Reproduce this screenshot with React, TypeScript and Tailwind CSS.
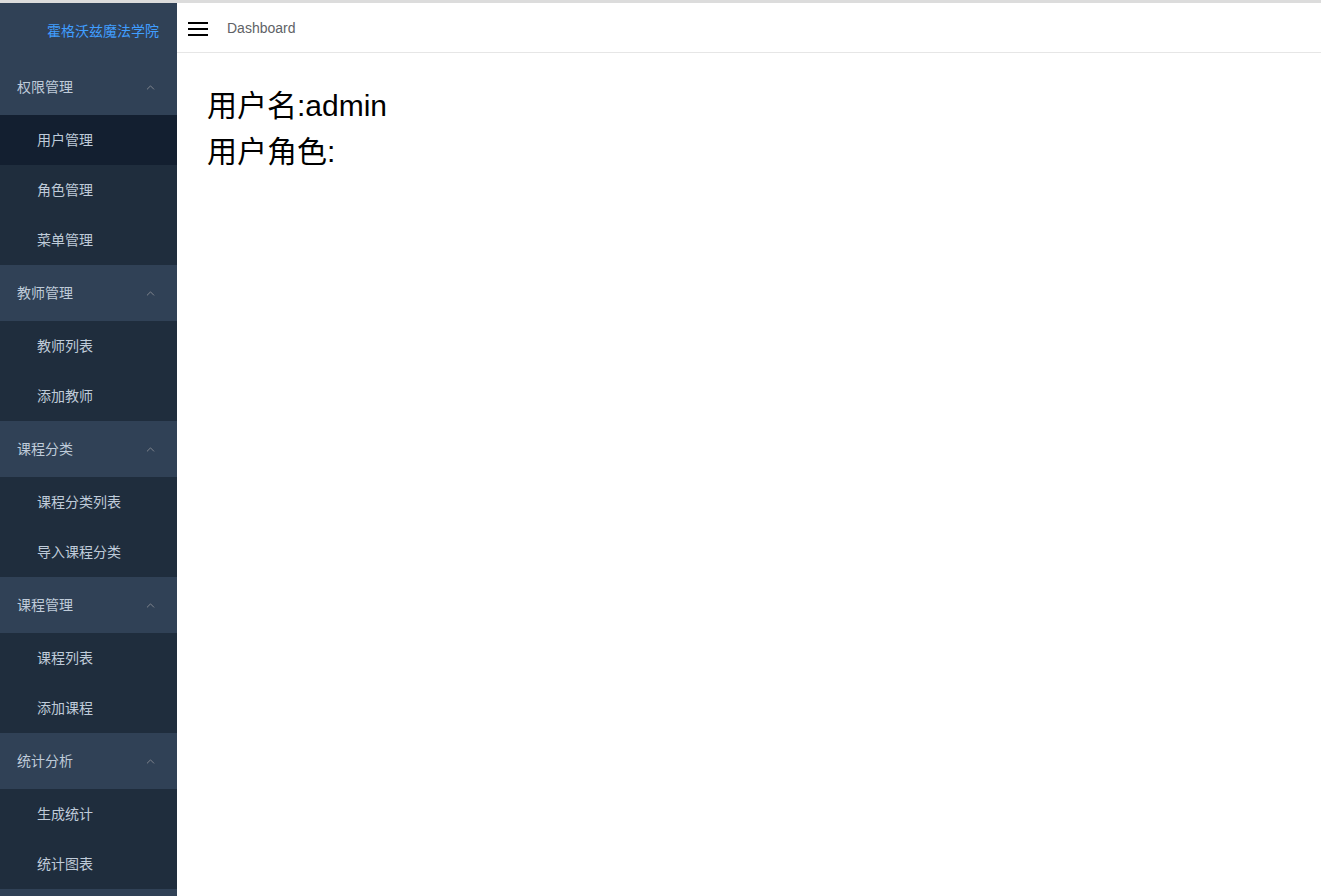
import { ChevronUp } from 'lucide-react';

const groups = [
  { title: '权限管理', items: ['用户管理', '角色管理', '菜单管理'] },
  { title: '教师管理', items: ['教师列表', '添加教师'] },
  { title: '课程分类', items: ['课程分类列表', '导入课程分类'] },
  { title: '课程管理', items: ['课程列表', '添加课程'] },
  { title: '统计分析', items: ['生成统计', '统计图表'] },
];

const font = { fontFamily: '"Liberation Sans", "Noto Sans CJK SC", sans-serif' };

export default function App() {
  return (
    <div className="h-[896px] overflow-hidden border-t-[3px] border-[#dcdcdc] flex" style={font}>
      {/* SIDEBAR */}
      <aside className="w-[177px] shrink-0 bg-[#304156] overflow-hidden">
        <div className="h-[56px] flex items-center justify-end pr-[18px] text-[14px] text-[#409eff]">
          霍格沃兹魔法学院
        </div>
        {groups.map((g) => (
          <div key={g.title}>
            <div className="h-[56px] flex items-center justify-between pl-[17px] pr-[20px] text-[14px] text-[#bfcbd9]">
              <span>{g.title}</span>
              <ChevronUp size={13} strokeWidth={1.5} className="text-[#909399]" />
            </div>
            {g.items.map((it) => (
              <div
                key={it}
                className={`h-[50px] flex items-center pl-[37px] text-[14px] text-[#bfcbd9] ${
                  it === '用户管理' ? 'bg-[#131f30]' : 'bg-[#1f2d3d]'
                }`}
              >
                {it}
              </div>
            ))}
          </div>
        ))}
      </aside>

      {/* MAIN */}
      <div className="flex-1 bg-white">
        <div className="h-[50px] border-b border-[#e6e6e6] flex items-center pt-[2px]">
          <svg width="20" height="16" viewBox="0 0 20 16" className="ml-[11px]">
            <rect x="0" y="1" width="20" height="2" fill="#000" />
            <rect x="0" y="7" width="20" height="2" fill="#000" />
            <rect x="0" y="13" width="20" height="2" fill="#000" />
          </svg>
          <span className="ml-[19px] text-[14px] text-[#606266]">Dashboard</span>
        </div>
        <div className="pl-[30px] pt-[30px] text-[30px] leading-[46px] text-black">
          <div>用户名:admin</div>
          <div>用户角色:</div>
        </div>
      </div>
    </div>
  );
}
